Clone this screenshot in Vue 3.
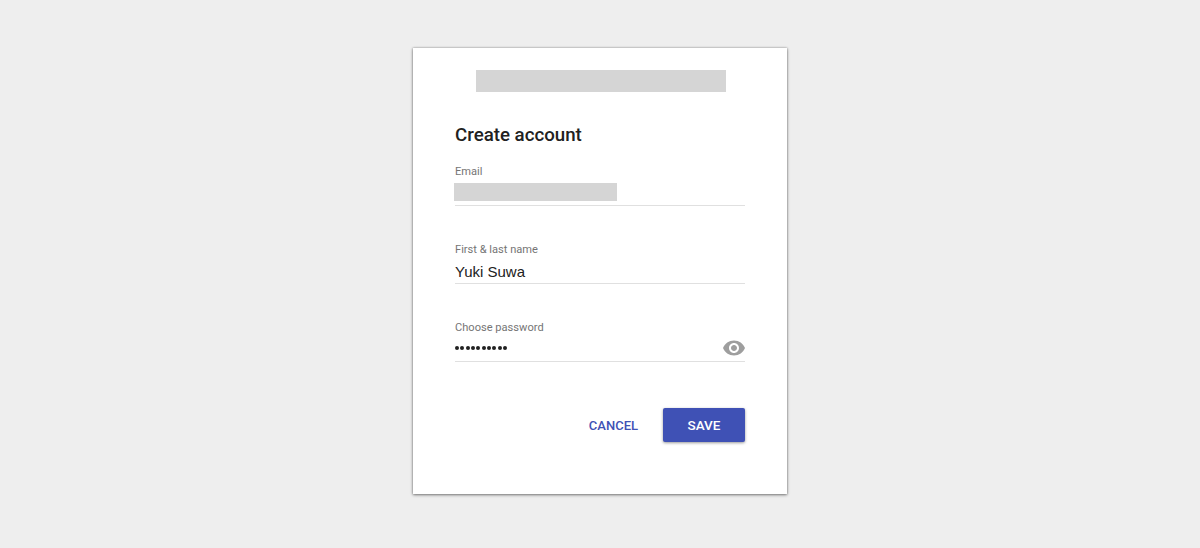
<template>
  <div class="page">
    <div class="card">
      <div class="logo"></div>
      <h1 class="title">Create account</h1>

      <div class="field">
        <label>Email</label>
        <div class="value"><div class="redacted"></div></div>
      </div>

      <div class="field">
        <label>First &amp; last name</label>
        <div class="value">Yuki Suwa</div>
      </div>

      <div class="field">
        <label>Choose password</label>
        <div class="value password">
          <span class="dots">
            <i v-for="n in 10" :key="n"></i>
          </span>
          <svg class="eye" width="24" height="24" viewBox="0 0 24 24">
            <path fill="#9e9e9e" d="M12 4.5C7 4.5 2.73 7.61 1 12c1.73 4.39 6 7.5 11 7.5s9.27-3.11 11-7.5c-1.73-4.39-6-7.5-11-7.5zM12 17c-2.76 0-5-2.24-5-5s2.24-5 5-5 5 2.24 5 5-2.24 5-5 5zm0-8c-1.66 0-3 1.34-3 3s1.34 3 3 3 3-1.34 3-3-1.34-3-3-3z"/>
          </svg>
        </div>
      </div>

      <div class="actions">
        <button class="cancel">CANCEL</button>
        <button class="save">SAVE</button>
      </div>
    </div>
  </div>
</template>

<script setup>
</script>

<style>
html, body {
  margin: 0;
  background: #eeeeee;
}
</style>

<style scoped>
.page {
  height: 548px;
  box-sizing: border-box;
  padding-top: 48px;
  display: flex;
  justify-content: center;
  align-items: flex-start;
  background: #eeeeee;
  font-family: Roboto, "Liberation Sans", sans-serif;
}

.card {
  width: 374px;
  height: 446px;
  box-sizing: border-box;
  padding: 22px 42px 0;
  background: #fff;
  box-shadow: 0 0 2px rgba(0, 0, 0, 0.3), 0 1px 3px rgba(0, 0, 0, 0.45);
}

.logo {
  width: 250px;
  height: 22px;
  margin: 0 0 0 20.5px;
  background: #d5d5d5;
}

.title {
  margin: 32px 0 0;
  font-size: 18.7px;
  line-height: 22px;
  font-weight: 500;
  color: #212121;
}

.field {
  margin-top: 19px;
  height: 64px;
}

.field + .field {
  margin-top: 14px;
}

.field label {
  display: block;
  font-size: 11.1px;
  line-height: 14px;
  color: #757575;
}

.value {
  height: 27px;
  box-sizing: border-box;
  padding-top: 5px;
  border-bottom: 1px solid #e0e0e0;
  font-family: "Liberation Sans", Arial, sans-serif;
  font-size: 15px;
  line-height: 19px;
  color: #212121;
}

.redacted {
  width: 163px;
  height: 18px;
  margin: -1px 0 0 -1px;
  background: #d5d5d5;
}

.password {
  display: flex;
  justify-content: space-between;
  align-items: center;
  padding-top: 0;
}

.dots {
  display: flex;
  gap: 1.33px;
}

.dots i {
  width: 4px;
  height: 4px;
  border-radius: 50%;
  background: #212121;
}

.eye {
  margin-right: -1px;
}

.actions {
  display: flex;
  justify-content: flex-end;
  align-items: center;
  gap: 25px;
  margin-top: 23px;
}

button {
  border: 0;
  padding: 0;
  font-family: inherit;
  font-size: 13.5px;
  font-weight: 500;
  cursor: pointer;
}

.cancel {
  background: none;
  color: #3f51b5;
  font-size: 13px;
}

.save {
  width: 82px;
  height: 34px;
  border-radius: 2px;
  background: #3f51b5;
  color: #fff;
  box-shadow: 0 1px 3px rgba(0, 0, 0, 0.4);
}
</style>
